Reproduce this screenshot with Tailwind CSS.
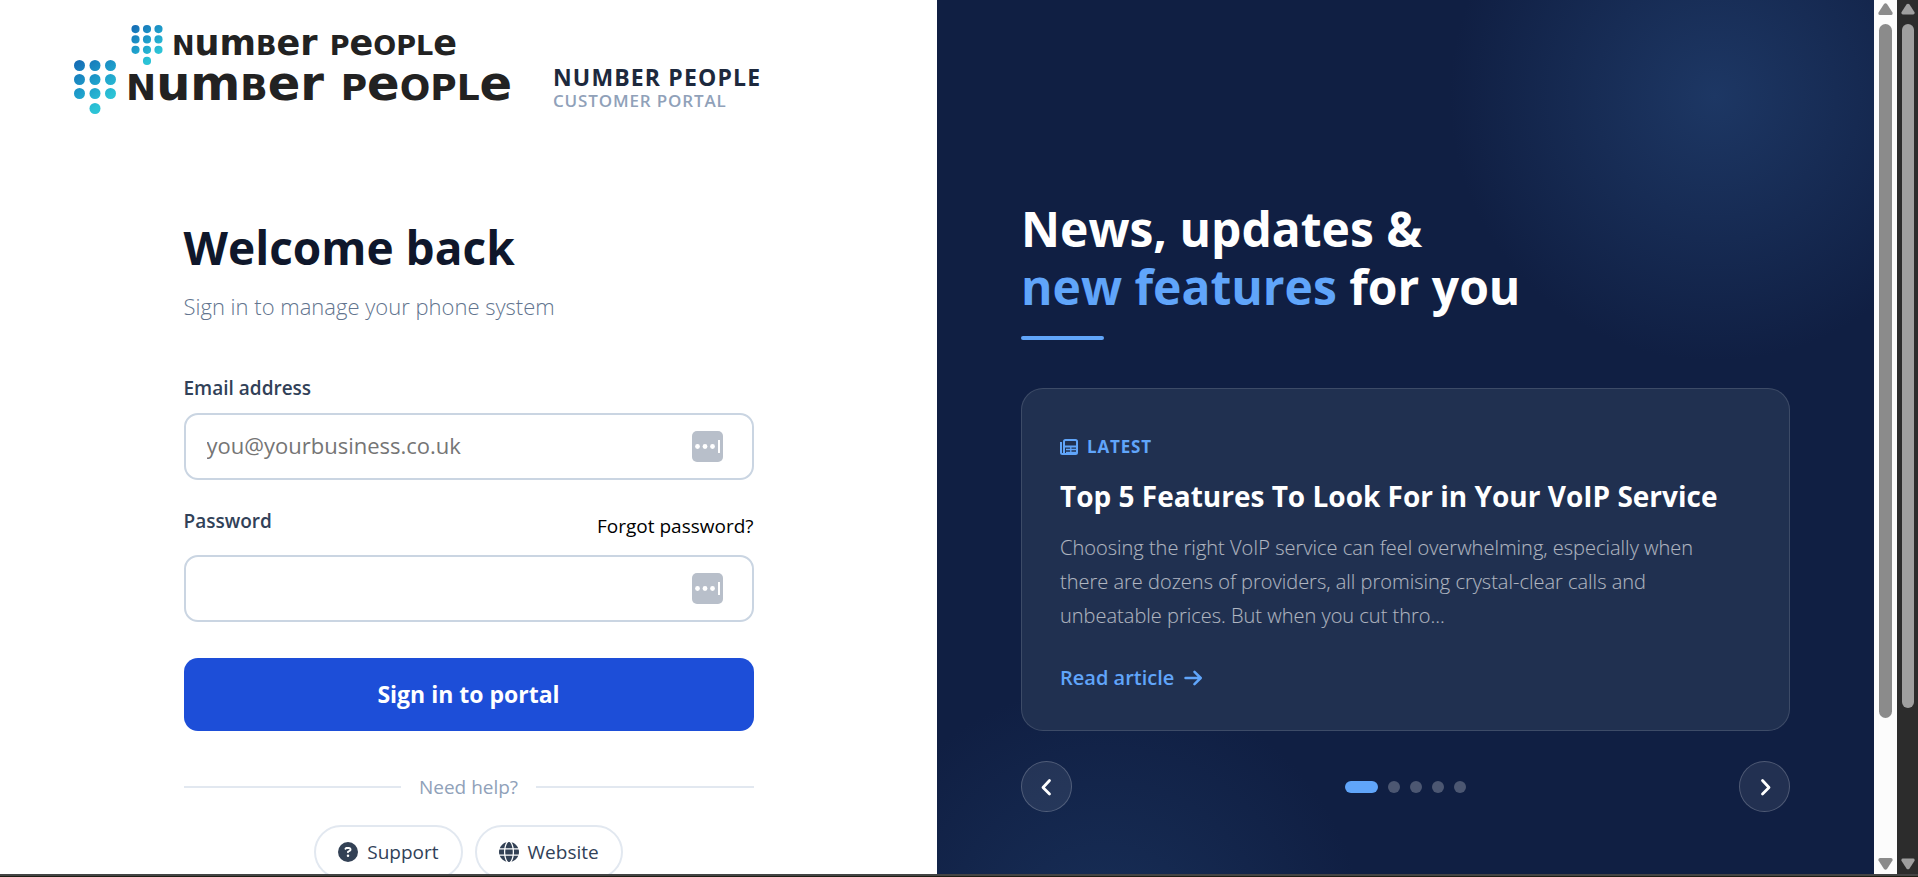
<!DOCTYPE html>
<html lang="en">
<head>
    <meta charset="UTF-8">
    <meta name="viewport" content="width=device-width, initial-scale=1.0">
    <title>Number People - Customer Portal</title>
    <script src="https://cdn.jsdelivr.net/npm/@tailwindcss/browser@4"></script>
</head>
<body class="h-screen flex flex-col overflow-hidden bg-white font-['Open_Sans',sans-serif]">
    <svg class="absolute w-0 h-0" aria-hidden="true">
        <defs>
            <linearGradient id="dots" x1="0" y1="0" x2="42" y2="54" gradientUnits="userSpaceOnUse">
                <stop offset="0" stop-color="#1468b3"/>
                <stop offset="0.45" stop-color="#1e9fcb"/>
                <stop offset="0.75" stop-color="#2cc3d6"/>
            </linearGradient>
            <symbol id="keypad" viewBox="0 0 42 54">
                <g fill="url(#dots)">
                    <circle cx="5.5" cy="5.5" r="5.5"/><circle cx="21" cy="5.5" r="5.5"/><circle cx="36.5" cy="5.5" r="5.5"/>
                    <circle cx="5.5" cy="19.5" r="5.5"/><circle cx="21" cy="19.5" r="5.5"/><circle cx="36.5" cy="19.5" r="5.5"/>
                    <circle cx="5.5" cy="33.5" r="5.5"/><circle cx="21" cy="33.5" r="5.5"/><circle cx="36.5" cy="33.5" r="5.5"/>
                    <circle cx="21" cy="48.5" r="5.5"/>
                </g>
            </symbol>
            <symbol id="autofill" viewBox="0 0 31 31">
                <rect width="31" height="31" rx="5" fill="#b8bfca"/>
                <g fill="#fff">
                    <circle cx="5.5" cy="15.5" r="2.4"/><circle cx="13" cy="15.5" r="2.4"/><circle cx="20.5" cy="15.5" r="2.4"/>
                    <rect x="26" y="9" width="2" height="13"/>
                </g>
            </symbol>
        </defs>
    </svg>

    <div class="flex flex-1 min-h-0">
        <div class="grid grid-cols-2 flex-1">
            <!-- Sign in -->
            <main class="overflow-hidden">
                <header class="relative flex items-start pt-[60px] pl-[74px]">
                    <div class="absolute top-[25px] left-[131px] flex gap-[9px]">
                        <svg class="w-[32px] h-[40px]"><use href="#keypad"/></svg>
                        <div class="text-[35px]/[36px] font-bold text-[#222] font-['DejaVu_Sans',sans-serif] whitespace-nowrap"><span class="text-[27px]">N</span>um<span class="text-[27px]">B</span>er <span class="text-[27px]">P</span>e<span class="text-[27px]">OPL</span>e</div>
                    </div>
                    <svg class="w-[42px] h-[54px]"><use href="#keypad"/></svg>
                    <div class="ml-[10px] w-[409px] text-[48px]/[46px] font-bold text-[#222] font-['DejaVu_Sans',sans-serif] whitespace-nowrap"><span class="text-[36px]">N</span>um<span class="text-[36px]">B</span>er <span class="text-[36px]">P</span>e<span class="text-[36px]">OPL</span>e</div>
                    <div class="ml-[18px] mt-[3px]">
                        <p class="text-[23px]/[28px] font-bold tracking-wider text-slate-800">NUMBER PEOPLE</p>
                        <p class="text-[17px]/[20px] font-semibold tracking-wider text-slate-400">CUSTOMER PORTAL</p>
                    </div>
                </header>

                <div class="mx-auto mt-[103px] max-w-[570px]">
                    <h1 class="text-[46px]/[60px] font-bold text-slate-900">Welcome back</h1>
                    <p class="mt-[14px] text-[22px]/[30px] font-light text-slate-500">Sign in to manage your phone system</p>

                    <form class="mt-[53px]">
                        <label for="email" class="block text-[19px]/[28px] font-semibold text-slate-700">Email address</label>
                        <div class="relative mt-[11px]">
                            <input id="email" type="email" placeholder="you@yourbusiness.co.uk" class="block w-full h-[67px] rounded-[14px] border-2 border-slate-300 px-[21px] pb-[4px] text-[22px] placeholder:text-[#757575]">
                            <svg class="absolute right-[31px] top-[18px] w-[31px] h-[31px]"><use href="#autofill"/></svg>
                        </div>
                        <div class="mt-[27px] flex justify-between items-start">
                            <label for="password" class="text-[19px]/[28px] font-semibold text-slate-700">Password</label>
                            <a href="#" class="mt-[5px] text-[19px]/[28px] text-black">Forgot password?</a>
                        </div>
                        <div class="relative mt-[15px]">
                            <input id="password" type="password" class="block w-full h-[67px] rounded-[14px] border-2 border-slate-300 px-[21px] pb-[4px] text-[22px]">
                            <svg class="absolute right-[31px] top-[18px] w-[31px] h-[31px]"><use href="#autofill"/></svg>
                        </div>
                        <button type="submit" class="mt-[36px] block w-full h-[73px] rounded-[14px] bg-[#1d4ed8] text-[23px] font-bold text-white">Sign in to portal</button>
                    </form>

                    <div class="mt-[42px] flex items-center gap-[18px] text-[19px]/[28px] text-slate-400">
                        <div class="h-[2px] flex-1 bg-slate-200"></div>
                        Need help?
                        <div class="h-[2px] flex-1 bg-slate-200"></div>
                    </div>

                    <div class="mt-[24px] flex justify-center gap-3 text-[19px]/[28px] text-slate-700">
                        <a href="#" class="flex items-center gap-[9px] h-[54px] px-[22px] rounded-full border-2 border-slate-200">
                            <svg class="w-[20px] h-[20px]" viewBox="0 0 512 512"><path fill="#334155" d="M256 0a256 256 0 1 0 0 512 256 256 0 1 0 0-512zM169.800 165.300c7.900-22.300 29.100-37.300 52.800-37.300h58.300c34.900 0 63.100 28.300 63.100 63.100 0 22.600-12.100 43.500-31.700 54.800L280 264.400c-.2 13-10.900 23.600-24 23.600-13.300 0-24-10.700-24-24v-13.500c0-8.600 4.600-16.500 12.100-20.800l44.300-25.400c4.700-2.700 7.600-7.700 7.600-13.100 0-8.400-6.800-15.100-15.100-15.100h-58.300c-3.400 0-6.400 2.100-7.500 5.300l-.4 1.200c-4.400 12.500-18.200 19-30.600 14.600s-19-18.200-14.600-30.600l.3-1.300zM224 352a32 32 0 1 1 64 0 32 32 0 1 1-64 0z"/></svg>
                            Support
                        </a>
                        <a href="#" class="flex items-center gap-[9px] h-[54px] px-[22px] rounded-full border-2 border-slate-200">
                            <svg class="w-[20px] h-[20px]" viewBox="0 0 512 512"><path fill="#334155" d="M352 256c0 22.200-1.200 43.600-3.300 64H163.300c-2.200-20.400-3.300-41.800-3.300-64s1.200-43.600 3.300-64h185.400c2.200 20.400 3.300 41.800 3.300 64zm28.800-64h123.100c5.300 20.500 8.100 41.900 8.100 64s-2.800 43.500-8.100 64H380.800c2.100-20.600 3.200-42 3.200-64s-1.100-43.400-3.200-64zm112.600-32H376.700c-10-63.900-29.800-117.400-55.300-151.600 78.300 20.700 142 77.500 171.900 151.600zm-149.100 0H167.700c6.100-36.400 15.500-68.600 27-94.700 10.500-23.600 22.200-40.700 33.500-51.500C239.400 3.200 248.700 0 256 0s16.600 3.200 27.800 13.800c11.300 10.800 23 27.900 33.500 51.500 11.600 26 20.900 58.200 27 94.700zm-209 0H18.600C48.600 85.900 112.200 29.100 190.600 8.400 165.100 42.600 145.300 96.100 135.300 160zM8.100 192h123.100c-2.100 20.600-3.200 42-3.200 64s1.100 43.400 3.200 64H8.100C2.800 299.500 0 278.100 0 256s2.800-43.500 8.100-64zm186.600 254.600c-11.600-26-20.900-58.200-27-94.600h176.600c-6.100 36.400-15.500 68.600-27 94.600-10.500 23.600-22.200 40.700-33.500 51.500C272.600 508.800 263.300 512 256 512s-16.600-3.200-27.800-13.800c-11.300-10.800-23-27.900-33.500-51.600zM135.300 352c10 63.900 29.800 117.400 55.300 151.600C112.200 482.900 48.600 426.100 18.600 352h116.700zm358.100 0c-30 74.100-93.600 130.900-171.900 151.600 25.500-34.200 45.200-87.700 55.300-151.600h116.600z"/></svg>
                            Website
                        </a>
                    </div>
                </div>
            </main>

            <!-- News -->
            <aside class="overflow-hidden px-[84px] pt-[200px] bg-[#101f43] bg-[radial-gradient(circle_at_83%_11%,#1d3764_0,#101f43_265px,transparent_265px),radial-gradient(circle_at_18%_108%,#182f58_0,transparent_260px)] text-white">
                <h2 class="text-[48px]/[58px] font-bold">News, updates &amp;<br><span class="text-[#60a5fa]">new features</span> for you</h2>
                <div class="mt-[20px] w-[83px] h-1 rounded-full bg-[#60a5fa]"></div>

                <article class="mt-12 rounded-[22px] border border-white/13 bg-[#203050] px-[38px] pt-[44px] pb-[38px]">
                    <p class="flex items-center gap-[9px] text-[17px]/[28px] font-bold tracking-wider text-[#60a5fa]">
                        <svg class="w-[18px] h-[16px]" viewBox="0 0 18 16" fill="none" stroke="#60a5fa" stroke-width="2">
                            <path d="M4 13.500V2.500Q4 1 5.500 1H15.500Q17 1 17 2.500V13.500Q17 15 15.500 15H2.500Q1 15 1 13.500V3"/>
                            <path d="M4 3V14M5 7.500H16"/>
                            <path d="M6 10.500H16M6 13.500H16M10.800 8V14" stroke-width="1.300"/>
                        </svg>
                        LATEST
                    </p>
                    <h3 class="mt-[17px] text-[28px]/[36px] font-bold">Top 5 Features To Look For in Your VoIP Service</h3>
                    <p class="mt-[17px] max-w-[660px] text-[20px]/[34px] font-light text-white/65">Choosing the right VoIP service can feel overwhelming, especially when there are dozens of providers, all promising crystal-clear calls and unbeatable prices. But when you cut thro...</p>
                    <a href="#" class="mt-[31px] flex items-center gap-[10px] text-[20px]/[28px] font-semibold text-[#60a5fa]">
                        Read article
                        <svg class="w-[18px] h-[16px]" viewBox="0 0 18 16" fill="none" stroke="#60a5fa" stroke-width="2.500" stroke-linecap="round" stroke-linejoin="round"><path d="M1.500 8H16.500M10.500 1.800L16.700 8L10.500 14.200"/></svg>
                    </a>
                </article>

                <div class="mt-[30px] flex items-center justify-between">
                    <button type="button" aria-label="Previous" class="flex items-center justify-center w-[51px] h-[51px] rounded-full border border-white/20 bg-white/8">
                        <svg class="w-[12px] h-[18px]" viewBox="0 0 12 18" fill="none" stroke="#fff" stroke-width="2.800" stroke-linecap="round" stroke-linejoin="round"><path d="M8.500 2.500L2 9.500L8.500 16"/></svg>
                    </button>
                    <div class="flex gap-[10px]">
                        <button type="button" aria-label="Slide 1" class="w-[33px] h-3 rounded-full bg-[#60a5fa]"></button>
                        <button type="button" aria-label="Slide 2" class="w-3 h-3 rounded-full bg-white/25"></button>
                        <button type="button" aria-label="Slide 3" class="w-3 h-3 rounded-full bg-white/25"></button>
                        <button type="button" aria-label="Slide 4" class="w-3 h-3 rounded-full bg-white/25"></button>
                        <button type="button" aria-label="Slide 5" class="w-3 h-3 rounded-full bg-white/25"></button>
                    </div>
                    <button type="button" aria-label="Next" class="flex items-center justify-center w-[51px] h-[51px] rounded-full border border-white/20 bg-white/8">
                        <svg class="w-[12px] h-[18px]" viewBox="0 0 12 18" fill="none" stroke="#fff" stroke-width="2.800" stroke-linecap="round" stroke-linejoin="round"><path d="M3.500 2.500L10 9.500L3.500 16"/></svg>
                    </button>
                </div>
            </aside>
        </div>

        <!-- Scrollbars -->
        <div class="w-[23px] flex flex-col items-center bg-[#fcfcfc] pt-[3px] pb-[4px]">
            <svg class="w-[15px] h-[12px] shrink-0" viewBox="0 0 15 12"><path fill="#8b8b8b" d="M6 1Q7.500-.5 9 1L14.500 9.500Q15 12 13 12H2Q0 12 .5 9.500Z"/></svg>
            <div class="mt-[9px] h-[694px] w-[13px] rounded-full bg-[#8b8b8b]"></div>
            <svg class="mt-auto w-[15px] h-[12px] shrink-0" viewBox="0 0 15 12"><path fill="#8b8b8b" d="M6 11Q7.500 12.500 9 11L14.500 2.500Q15 0 13 0H2Q0 0 .5 2.500Z"/></svg>
        </div>
        <div class="w-[21px] flex flex-col items-center bg-[#2c2c2c] pt-[3px] pb-[4px]">
            <svg class="w-[14px] h-[12px] shrink-0" viewBox="0 0 15 12"><path fill="#9f9f9f" d="M6 1Q7.500-.5 9 1L14.500 9.500Q15 12 13 12H2Q0 12 .5 9.500Z"/></svg>
            <div class="mt-[9px] h-[684px] w-[12px] rounded-full bg-[#9f9f9f]"></div>
            <svg class="mt-auto w-[14px] h-[12px] shrink-0" viewBox="0 0 15 12"><path fill="#9f9f9f" d="M6 11Q7.500 12.500 9 11L14.500 2.500Q15 0 13 0H2Q0 0 .5 2.500Z"/></svg>
        </div>
    </div>
    <div class="h-[3px] border-t-2 border-[#444] bg-[#1e1e14]"></div>
</body>
</html>
